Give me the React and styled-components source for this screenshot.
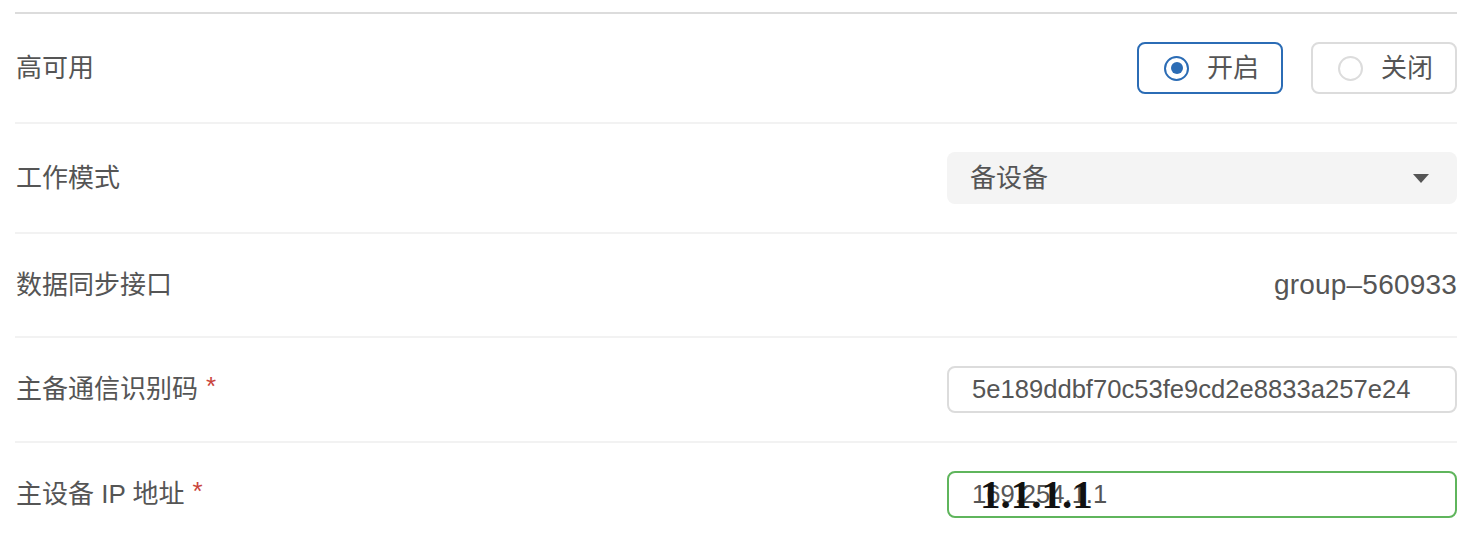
import React from 'react';
import styled, { createGlobalStyle } from 'styled-components';

const Global = createGlobalStyle`
  body {
    margin: 0;
    background: #fff;
    font-family: "Liberation Sans", "Noto Sans CJK SC", sans-serif;
    color: #555;
  }
`;

const Page = styled.div`
  padding: 12px 25px 0 15px;
`;

const List = styled.div`
  border-top: 2px solid #dcdcdc;
`;

const Row = styled.div`
  display: flex;
  align-items: center;
  justify-content: space-between;
  padding: 28px 0;
  border-bottom: ${p => (p.last ? 'none' : '2px solid #f2f2f2')};
`;

const Label = styled.div`
  box-sizing: border-box;
  display: flex;
  align-items: center;
  height: 46px;
  padding: 0 0 6px 1px;
  font-size: 26px;
  color: #555;
`;

const Star = styled.span`
  color: #c9443c;
  margin-left: 8px;
`;

const Group = styled.div`
  display: flex;
  gap: 28px;
`;

const Option = styled.div`
  box-sizing: border-box;
  width: 146px;
  height: 52px;
  display: flex;
  align-items: center;
  padding-left: 25px;
  gap: 18px;
  border: 2px solid ${p => (p.checked ? '#2b6cb5' : '#dcdcdc')};
  border-radius: 8px;
  font-size: 26px;
  color: #555;
`;

const OptionText = styled.span`
  padding-bottom: 5px;
`;

const Dot = styled.span`
  box-sizing: border-box;
  width: 25px;
  height: 25px;
  border-radius: 50%;
  border: 2px solid ${p => (p.checked ? '#2b6cb5' : '#dcdcdc')};
  display: flex;
  align-items: center;
  justify-content: center;
  &::after {
    content: '';
    width: 12px;
    height: 12px;
    border-radius: 50%;
    background: ${p => (p.checked ? '#2b6cb5' : 'transparent')};
  }
`;

const Select = styled.div`
  box-sizing: border-box;
  width: 510px;
  height: 52px;
  display: flex;
  align-items: center;
  justify-content: space-between;
  padding: 0 28px 0 23px;
  background: #f4f4f4;
  border-radius: 8px;
  font-size: 26px;
  color: #555;
`;

const SelectText = styled.span`
  padding-bottom: 5px;
`;

const Caret = styled.span`
  width: 0;
  height: 0;
  border-left: 8px solid transparent;
  border-right: 8px solid transparent;
  border-top: 9px solid #555;
`;

const Value = styled.div`
  height: 46px;
  display: flex;
  align-items: center;
  font-size: 28px;
  color: #555;
  letter-spacing: 0.2px;
`;

const Field = styled.div`
  position: relative;
  box-sizing: border-box;
  width: 510px;
  height: 47px;
  display: flex;
  align-items: center;
  padding-left: 23px;
  border: 2px solid ${p => (p.valid ? '#5fb55c' : '#dcdcdc')};
  border-radius: 8px;
  font-size: 25.6px;
  color: #555;
`;

const Overlay = styled.span`
  position: absolute;
  left: 31px;
  top: -2px;
  font-family: "Liberation Serif", serif;
  font-size: 41px;
  font-weight: 600;
  color: #111;
  line-height: 47px;
`;

const Radio = ({ checked, children }) => (
  <Option checked={checked}>
    <Dot checked={checked} />
    <OptionText>{children}</OptionText>
  </Option>
);

export default function App() {
  return (
    <Page>
      <Global />
      <List>
        <Row>
          <Label>高可用</Label>
          <Group>
            <Radio checked>开启</Radio>
            <Radio>关闭</Radio>
          </Group>
        </Row>
        <Row>
          <Label>工作模式</Label>
          <Select>
            <SelectText>备设备</SelectText>
            <Caret />
          </Select>
        </Row>
        <Row>
          <Label>数据同步接口</Label>
          <Value>group–560933</Value>
        </Row>
        <Row>
          <Label>主备通信识别码<Star>*</Star></Label>
          <Field>5e189ddbf70c53fe9cd2e8833a257e24</Field>
        </Row>
        <Row last>
          <Label>主设备 IP 地址<Star>*</Star></Label>
          <Field valid>
            169.254.1.1
            <Overlay>1.1.1.1</Overlay>
          </Field>
        </Row>
      </List>
    </Page>
  );
}
